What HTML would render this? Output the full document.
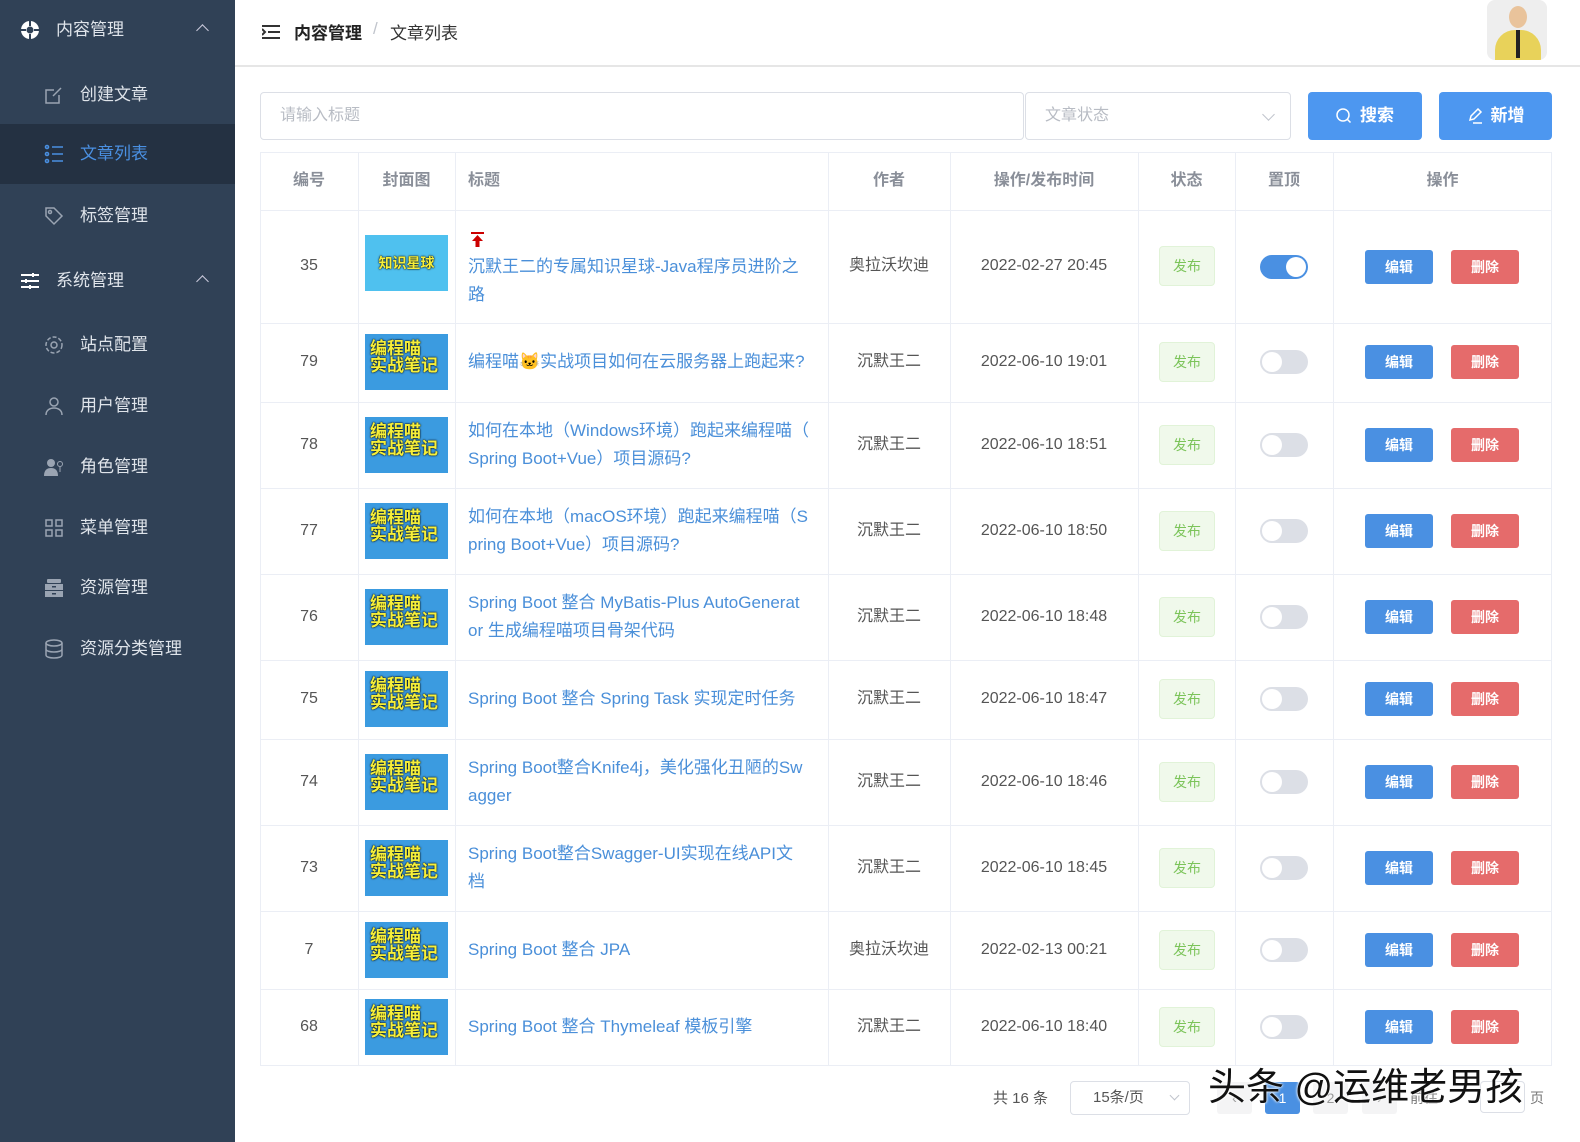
<!DOCTYPE html>
<html><head><meta charset="utf-8"><style>
*{margin:0;padding:0;box-sizing:border-box}
body{width:1580px;height:1142px;overflow:hidden;background:#fff;font-family:"Liberation Sans","Noto Sans CJK SC",sans-serif;position:relative}
.sb{position:absolute;left:0;top:0;width:235px;height:1142px;background:#304156}
.mi{position:absolute;left:0;width:235px;height:60px;color:#dfe4ea;font-size:17px;line-height:60px}
.mi .t{position:absolute;left:80px}
.mi .ic{position:absolute;left:44px;top:20px;width:20px;height:20px}
.grp .t{left:56px}
.grp .ic{left:20px}
.grp .ar{position:absolute;left:198px;top:26px;width:9px;height:9px;border-left:1.5px solid #ccd;border-top:1.5px solid #ccd;transform:rotate(45deg)}
.act{background:#243142;color:#4a90e2}
.hd{position:absolute;left:235px;top:0;right:0;height:67px;border-bottom:2px solid #e6e6e6}
.abs{position:absolute}
.inp{position:absolute;border:1px solid #dcdfe6;border-radius:4px;color:#b8bcc4;font-size:16px;line-height:46px;padding-left:19px}
.btn{position:absolute;background:#4d97f0;color:#fff;border-radius:4px;font-size:17px;font-weight:bold;text-align:center;line-height:48px}
.tb{position:absolute;left:260px;top:152px;width:1292px;height:914px;border:1px solid #ebeef5}
.vl{position:absolute;top:152px;height:914px;width:1px;background:#ebeef5}
.hl{position:absolute;left:260px;width:1292px;height:1px;background:#ebeef5}
.th{position:absolute;top:152px;height:58px;line-height:58px;color:#8a8f99;font-size:16px;font-weight:bold;text-align:center}
.c{position:absolute;text-align:center;font-size:16px;color:#555;line-height:20px}
.cov{position:absolute;left:365px;width:83px;height:56px;background:#3b9be0;color:#f6ef3a;font-weight:bold;font-size:17px;line-height:17px;padding:6px 0 0 5px;text-shadow:0 0 2px #000,0 0 1px #000;white-space:nowrap;overflow:hidden}
.cov2{background:#4fc1ef;font-size:14px;line-height:56px;padding:0;text-align:center}
.ttl{position:absolute;left:468px;width:355px;color:#4a8fd9;font-size:17px;line-height:28px;white-space:nowrap}
.tag{position:absolute;left:1159px;width:56px;height:40px;background:#f0f9eb;border:1px solid #e1f3d8;border-radius:4px;color:#7cc45a;font-size:14px;text-align:center;line-height:38px}
.sw{position:absolute;left:1260px;width:48px;height:24px;border-radius:12px;background:#dcdfe6}
.sw:after{content:"";position:absolute;left:2px;top:2px;width:20px;height:20px;border-radius:50%;background:#fff}
.sw.on{background:#4a90e2}.sw.on:after{left:26px}
.eb,.db{position:absolute;width:68px;height:34px;border-radius:3px;color:#fff;font-size:14px;font-weight:bold;text-align:center;line-height:34px}
.eb{left:1365px;background:#4a90e2}.db{left:1451px;background:#e56b6b}
.pg{position:absolute;top:1082px;height:32px;border-radius:3px;background:#f4f4f5;color:#999;font-size:14px;text-align:center;line-height:32px}
</style></head><body>
<div class="sb">
 <div class="mi grp" style="top:0"><svg class="ic" viewBox="0 0 20 20"><circle cx="10" cy="10" r="9" fill="#fff"/><circle cx="10" cy="10" r="3.5" fill="#304156"/><rect x="9" y="0" width="2" height="6" fill="#304156"/><rect x="9" y="14" width="2" height="6" fill="#304156"/><rect x="0" y="9" width="6" height="2" fill="#304156"/><rect x="14" y="9" width="6" height="2" fill="#304156"/></svg><span class="t">内容管理</span><span class="ar"></span></div>
 <div class="mi" style="top:65px"><svg class="ic" viewBox="0 0 20 20" fill="none" stroke="#9aa4b2" stroke-width="1.5"><path d="M15 10v8H2V5h8M9 11l8-8"/></svg><span class="t">创建文章</span></div>
 <div class="mi act" style="top:124px"><svg class="ic" viewBox="0 0 20 20" fill="none" stroke="#4a90e2" stroke-width="1.6"><circle cx="3" cy="3" r="1.5"/><circle cx="3" cy="10" r="1.5"/><circle cx="3" cy="17" r="1.5"/><path d="M8 3h11M8 10h11M8 17h11"/></svg><span class="t">文章列表</span></div>
 <div class="mi" style="top:186px"><svg class="ic" viewBox="0 0 20 20" fill="none" stroke="#9aa4b2" stroke-width="1.5"><path d="M2 2h8l8 8-8 8-8-8z"/><circle cx="6" cy="6" r="1.5"/></svg><span class="t">标签管理</span></div>
 <div class="mi grp" style="top:251px"><svg class="ic" viewBox="0 0 20 20" fill="none" stroke="#fff" stroke-width="2"><path d="M1 4h18M1 10h18M1 16h18"/><path d="M13 2v4M6 8v4M10 14v4"/></svg><span class="t">系统管理</span><span class="ar"></span></div>
 <div class="mi" style="top:315px"><svg class="ic" viewBox="0 0 20 20" fill="none" stroke="#9aa4b2" stroke-width="1.5"><circle cx="10" cy="10" r="3"/><circle cx="10" cy="10" r="8" stroke-dasharray="4 2"/></svg><span class="t">站点配置</span></div>
 <div class="mi" style="top:376px"><svg class="ic" viewBox="0 0 20 20" fill="none" stroke="#9aa4b2" stroke-width="1.5"><circle cx="10" cy="6" r="4"/><path d="M2 19c0-5 4-7 8-7s8 2 8 7"/></svg><span class="t">用户管理</span></div>
 <div class="mi" style="top:437px"><svg class="ic" viewBox="0 0 20 20" fill="#9aa4b2"><circle cx="7" cy="6" r="4"/><path d="M0 19c0-6 3-8 7-8s7 2 7 8z"/><circle cx="16" cy="7" r="2.5" fill="none" stroke="#9aa4b2"/><rect x="15.5" y="9" width="1" height="6"/></svg><span class="t">角色管理</span></div>
 <div class="mi" style="top:498px"><svg class="ic" viewBox="0 0 20 20" fill="none" stroke="#9aa4b2" stroke-width="1.5"><rect x="2" y="2" width="6" height="6"/><rect x="12" y="2" width="6" height="6"/><rect x="2" y="12" width="6" height="6"/><rect x="12" y="12" width="6" height="6"/></svg><span class="t">菜单管理</span></div>
 <div class="mi" style="top:558px"><svg class="ic" viewBox="0 0 20 20" fill="#9aa4b2"><rect x="3" y="1" width="14" height="4" rx="1"/><rect x="1" y="6" width="18" height="6"/><rect x="1" y="13" width="18" height="6"/><rect x="8" y="8" width="4" height="1.5" fill="#304156"/><rect x="8" y="15" width="4" height="1.5" fill="#304156"/></svg><span class="t">资源管理</span></div>
 <div class="mi" style="top:619px"><svg class="ic" viewBox="0 0 20 20" fill="none" stroke="#9aa4b2" stroke-width="1.5"><ellipse cx="10" cy="4" rx="8" ry="3"/><path d="M2 4v12c0 2 4 3 8 3s8-1 8-3V4M2 10c0 2 4 3 8 3s8-1 8-3"/></svg><span class="t">资源分类管理</span></div>
</div>
<div class="hd">
 <svg class="abs" style="left:27px;top:24px" width="18" height="16" viewBox="0 0 18 16" fill="none" stroke="#333" stroke-width="2"><path d="M0 2h18M6 8h12M0 14h18M0 5l3 3-3 3"/></svg>
 <div class="abs" style="left:59px;top:19px;font-size:17px;font-weight:bold;color:#222">内容管理</div>
 <div class="abs" style="left:138px;top:19px;font-size:17px;color:#c0c4cc">/</div>
 <div class="abs" style="left:155px;top:19px;font-size:17px;color:#333">文章列表</div>
 <div class="abs" style="left:1252px;top:0;width:60px;height:60px;border-radius:8px;background:#eee;overflow:hidden"><div class="abs" style="left:22px;top:6px;width:18px;height:22px;border-radius:50%;background:#e9c39b"></div><div class="abs" style="left:8px;top:30px;width:46px;height:30px;border-radius:20px 20px 0 0;background:#e8d25a"></div><div class="abs" style="left:29px;top:30px;width:4px;height:28px;background:#222"></div></div>
</div>
<div class="inp" style="left:260px;top:92px;width:764px;height:48px">请输入标题</div>
<div class="inp" style="left:1025px;top:92px;width:266px;height:48px">文章状态<span class="abs" style="left:238px;top:17px;width:9px;height:9px;border-right:1.5px solid #c0c4cc;border-bottom:1.5px solid #c0c4cc;transform:rotate(45deg)"></span></div>
<div class="btn" style="left:1308px;top:92px;width:114px;height:48px"><svg style="vertical-align:-3px;margin-right:8px" width="16" height="16" viewBox="0 0 16 16" fill="none" stroke="#fff" stroke-width="1.5"><circle cx="7" cy="7" r="6"/><path d="M11.5 11.5l3 3"/></svg>搜索</div>
<div class="btn" style="left:1439px;top:92px;width:113px;height:48px"><svg style="vertical-align:-3px;margin-right:8px" width="16" height="16" viewBox="0 0 16 16" fill="none" stroke="#fff" stroke-width="1.5"><path d="M3 12l1-4 7-7 3 3-7 7zM6 15h9"/></svg>新增</div>

<div class="tb"></div>
<div class="vl" style="left:358px"></div><div class="vl" style="left:455px"></div><div class="vl" style="left:828px"></div><div class="vl" style="left:950px"></div><div class="vl" style="left:1138px"></div><div class="vl" style="left:1235px"></div><div class="vl" style="left:1333px"></div>
<div class="hl" style="top:210px"></div><div class="hl" style="top:323px"></div><div class="hl" style="top:402px"></div><div class="hl" style="top:488px"></div><div class="hl" style="top:574px"></div><div class="hl" style="top:660px"></div><div class="hl" style="top:739px"></div><div class="hl" style="top:825px"></div><div class="hl" style="top:911px"></div><div class="hl" style="top:989px"></div>
<div class="th" style="left:260px;width:98px">编号</div>
<div class="th" style="left:358px;width:97px">封面图</div>
<div class="th" style="left:468px">标题</div>
<div class="th" style="left:828px;width:122px">作者</div>
<div class="th" style="left:950px;width:188px">操作/发布时间</div>
<div class="th" style="left:1138px;width:97px">状态</div>
<div class="th" style="left:1235px;width:98px">置顶</div>
<div class="th" style="left:1333px;width:219px">操作</div>

<!-- row 35 -->
<div class="c" style="left:260px;width:98px;top:256px">35</div>
<div class="cov cov2" style="top:235px">知识星球</div>
<div class="abs" style="left:471px;top:232px;width:13px;height:2px;background:#c00"></div>
<svg class="abs" style="left:472px;top:235px" width="11" height="12" viewBox="0 0 11 12"><path d="M5.5 0L11 6H7.5v6h-4V6H0z" fill="#c00"/></svg>
<div class="ttl" style="top:253px">沉默王二的专属知识星球-Java程序员进阶之<br>路</div>
<div class="c" style="left:828px;width:122px;top:256px">奥拉沃坎迪</div>
<div class="c" style="left:950px;width:188px;top:256px">2022-02-27 20:45</div>
<div class="tag" style="top:246px">发布</div><div class="sw on" style="top:255px"></div>
<div class="eb" style="top:250px">编辑</div><div class="db" style="top:250px">删除</div>

<!-- row 79 c362 -->
<div class="c" style="left:260px;width:98px;top:352px">79</div>
<div class="cov" style="top:334px">编程喵<br>实战笔记</div>
<div class="ttl" style="top:348px">编程喵🐱实战项目如何在云服务器上跑起来?</div>
<div class="c" style="left:828px;width:122px;top:352px">沉默王二</div>
<div class="c" style="left:950px;width:188px;top:352px">2022-06-10 19:01</div>
<div class="tag" style="top:342px">发布</div><div class="sw" style="top:350px"></div>
<div class="eb" style="top:345px">编辑</div><div class="db" style="top:345px">删除</div>

<!-- row 78 c445 -->
<div class="c" style="left:260px;width:98px;top:435px">78</div>
<div class="cov" style="top:417px">编程喵<br>实战笔记</div>
<div class="ttl" style="top:417px">如何在本地（Windows环境）跑起来编程喵（<br>Spring Boot+Vue）项目源码?</div>
<div class="c" style="left:828px;width:122px;top:435px">沉默王二</div>
<div class="c" style="left:950px;width:188px;top:435px">2022-06-10 18:51</div>
<div class="tag" style="top:425px">发布</div><div class="sw" style="top:433px"></div>
<div class="eb" style="top:428px">编辑</div><div class="db" style="top:428px">删除</div>

<!-- row 77 c531 -->
<div class="c" style="left:260px;width:98px;top:521px">77</div>
<div class="cov" style="top:503px">编程喵<br>实战笔记</div>
<div class="ttl" style="top:503px">如何在本地（macOS环境）跑起来编程喵（S<br>pring Boot+Vue）项目源码?</div>
<div class="c" style="left:828px;width:122px;top:521px">沉默王二</div>
<div class="c" style="left:950px;width:188px;top:521px">2022-06-10 18:50</div>
<div class="tag" style="top:511px">发布</div><div class="sw" style="top:519px"></div>
<div class="eb" style="top:514px">编辑</div><div class="db" style="top:514px">删除</div>

<!-- row 76 c617 -->
<div class="c" style="left:260px;width:98px;top:607px">76</div>
<div class="cov" style="top:589px">编程喵<br>实战笔记</div>
<div class="ttl" style="top:589px">Spring Boot 整合 MyBatis-Plus AutoGenerat<br>or 生成编程喵项目骨架代码</div>
<div class="c" style="left:828px;width:122px;top:607px">沉默王二</div>
<div class="c" style="left:950px;width:188px;top:607px">2022-06-10 18:48</div>
<div class="tag" style="top:597px">发布</div><div class="sw" style="top:605px"></div>
<div class="eb" style="top:600px">编辑</div><div class="db" style="top:600px">删除</div>

<!-- row 75 c699 -->
<div class="c" style="left:260px;width:98px;top:689px">75</div>
<div class="cov" style="top:671px">编程喵<br>实战笔记</div>
<div class="ttl" style="top:685px">Spring Boot 整合 Spring Task 实现定时任务</div>
<div class="c" style="left:828px;width:122px;top:689px">沉默王二</div>
<div class="c" style="left:950px;width:188px;top:689px">2022-06-10 18:47</div>
<div class="tag" style="top:679px">发布</div><div class="sw" style="top:687px"></div>
<div class="eb" style="top:682px">编辑</div><div class="db" style="top:682px">删除</div>

<!-- row 74 c782 -->
<div class="c" style="left:260px;width:98px;top:772px">74</div>
<div class="cov" style="top:754px">编程喵<br>实战笔记</div>
<div class="ttl" style="top:754px">Spring Boot整合Knife4j，美化强化丑陋的Sw<br>agger</div>
<div class="c" style="left:828px;width:122px;top:772px">沉默王二</div>
<div class="c" style="left:950px;width:188px;top:772px">2022-06-10 18:46</div>
<div class="tag" style="top:762px">发布</div><div class="sw" style="top:770px"></div>
<div class="eb" style="top:765px">编辑</div><div class="db" style="top:765px">删除</div>

<!-- row 73 c868 -->
<div class="c" style="left:260px;width:98px;top:858px">73</div>
<div class="cov" style="top:840px">编程喵<br>实战笔记</div>
<div class="ttl" style="top:840px">Spring Boot整合Swagger-UI实现在线API文<br>档</div>
<div class="c" style="left:828px;width:122px;top:858px">沉默王二</div>
<div class="c" style="left:950px;width:188px;top:858px">2022-06-10 18:45</div>
<div class="tag" style="top:848px">发布</div><div class="sw" style="top:856px"></div>
<div class="eb" style="top:851px">编辑</div><div class="db" style="top:851px">删除</div>

<!-- row 7 c950 -->
<div class="c" style="left:260px;width:98px;top:940px">7</div>
<div class="cov" style="top:922px">编程喵<br>实战笔记</div>
<div class="ttl" style="top:936px">Spring Boot 整合 JPA</div>
<div class="c" style="left:828px;width:122px;top:940px">奥拉沃坎迪</div>
<div class="c" style="left:950px;width:188px;top:940px">2022-02-13 00:21</div>
<div class="tag" style="top:930px">发布</div><div class="sw" style="top:938px"></div>
<div class="eb" style="top:933px">编辑</div><div class="db" style="top:933px">删除</div>

<!-- row 68 c1027 -->
<div class="c" style="left:260px;width:98px;top:1017px">68</div>
<div class="cov" style="top:999px">编程喵<br>实战笔记</div>
<div class="ttl" style="top:1013px">Spring Boot 整合 Thymeleaf 模板引擎</div>
<div class="c" style="left:828px;width:122px;top:1017px">沉默王二</div>
<div class="c" style="left:950px;width:188px;top:1017px">2022-06-10 18:40</div>
<div class="tag" style="top:1007px">发布</div><div class="sw" style="top:1015px"></div>
<div class="eb" style="top:1010px">编辑</div><div class="db" style="top:1010px">删除</div>

<!-- pagination -->
<div class="abs" style="left:993px;top:1087px;font-size:15px;color:#555">共 16 条</div>
<div class="inp" style="left:1070px;top:1081px;width:120px;height:34px;line-height:32px;color:#555;font-size:15px;padding-left:22px">15条/页<span class="abs" style="left:100px;top:10px;width:7px;height:7px;border-right:1.5px solid #c0c4cc;border-bottom:1.5px solid #c0c4cc;transform:rotate(45deg)"></span></div>
<div class="pg" style="left:1217px;width:35px">‹</div>
<div class="pg" style="left:1265px;width:35px;background:#4a90e2;color:#fff">1</div>
<div class="pg" style="left:1313px;width:35px">2</div>
<div class="pg" style="left:1362px;width:35px">›</div>
<div class="abs" style="left:1410px;top:1088px;font-size:14px;color:#777">前往</div>
<div class="inp" style="left:1480px;top:1081px;width:45px;height:32px"></div>
<div class="abs" style="left:1530px;top:1088px;font-size:14px;color:#777">页</div>
<div class="abs" style="left:1208px;top:1056px;font-size:38px;color:#111;text-shadow:0 0 3px #fff,0 0 2px #fff;white-space:nowrap">头条 @运维老男孩</div>
</body></html>
